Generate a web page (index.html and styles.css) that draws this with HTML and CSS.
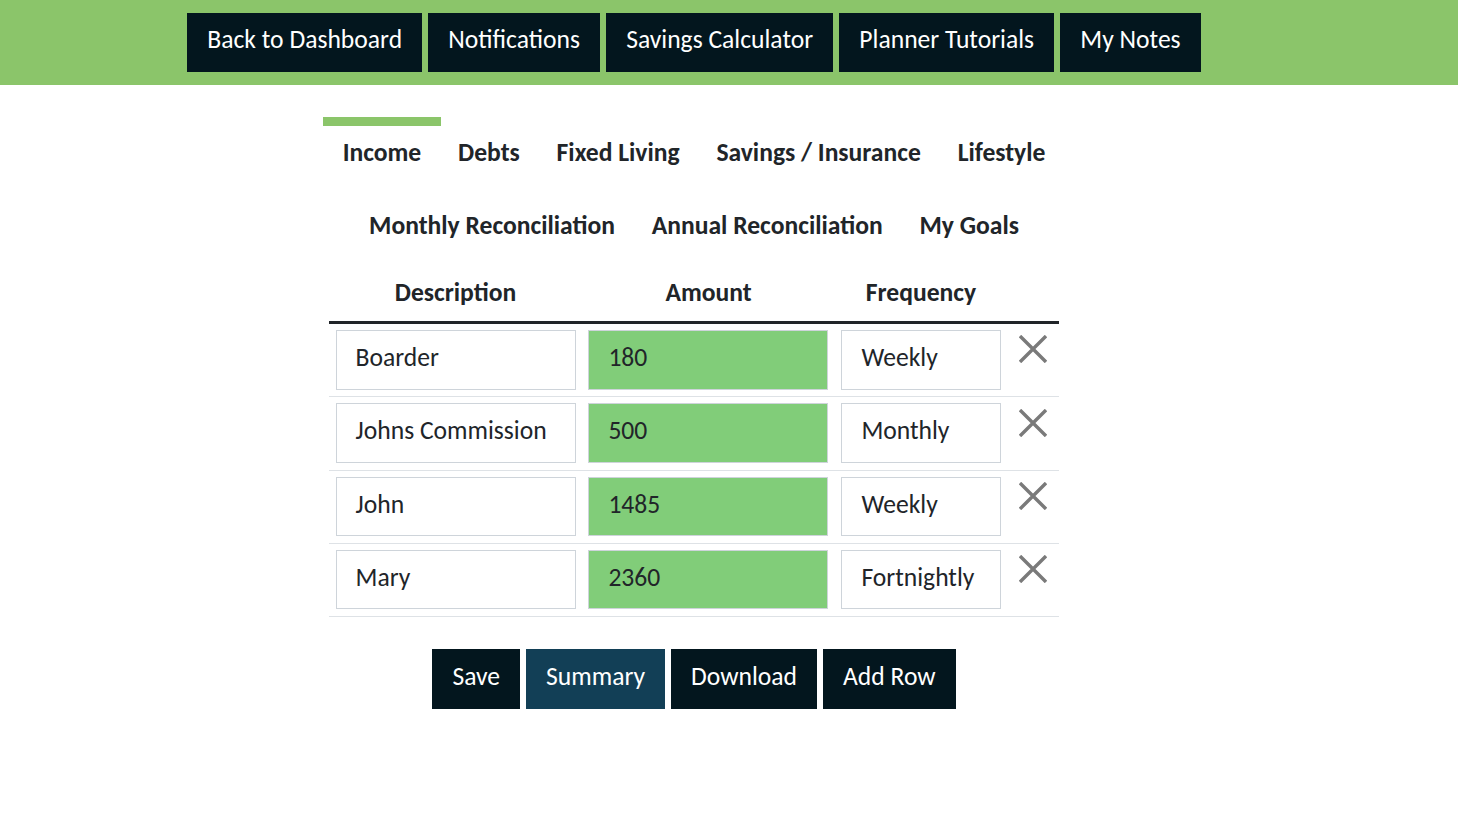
FILE: index.html
```html
<!DOCTYPE html>
<html lang="en">
<head>
<meta charset="utf-8">
<title>Planner</title>
<link rel="stylesheet" href="styles.css">
</head>
<body>
<header class="topbar">
  <nav class="topnav">
    <a class="btn">Back to Dashboard</a>
    <a class="btn">Notifications</a>
    <a class="btn">Savings Calculator</a>
    <a class="btn">Planner Tutorials</a>
    <a class="btn">My Notes</a>
  </nav>
</header>
<main class="page">
  <ul class="tabs">
    <li class="tab active">Income</li>
    <li class="tab">Debts</li>
    <li class="tab">Fixed Living</li>
    <li class="tab">Savings / Insurance</li>
    <li class="tab">Lifestyle</li>
    <li class="tab">Monthly Reconciliation</li>
    <li class="tab">Annual Reconciliation</li>
    <li class="tab">My Goals</li>
  </ul>
  <div class="table">
    <div class="row head">
      <div class="th">Description</div>
      <div class="th">Amount</div>
      <div class="th">Frequency</div>
      <div></div>
    </div>
    <div class="row">
      <div class="field">Boarder</div>
      <div class="field amount">180</div>
      <div class="field freq">Weekly</div>
      <button class="remove" aria-label="Remove"><svg viewBox="0 0 28 28" class="x"><path d="M1 1 27 27M27 1 1 27"/></svg></button>
    </div>
    <div class="row">
      <div class="field">Johns Commission</div>
      <div class="field amount">500</div>
      <div class="field freq">Monthly</div>
      <button class="remove" aria-label="Remove"><svg viewBox="0 0 28 28" class="x"><path d="M1 1 27 27M27 1 1 27"/></svg></button>
    </div>
    <div class="row">
      <div class="field">John</div>
      <div class="field amount">1485</div>
      <div class="field freq">Weekly</div>
      <button class="remove" aria-label="Remove"><svg viewBox="0 0 28 28" class="x"><path d="M1 1 27 27M27 1 1 27"/></svg></button>
    </div>
    <div class="row">
      <div class="field">Mary</div>
      <div class="field amount">2360</div>
      <div class="field freq">Fortnightly</div>
      <button class="remove" aria-label="Remove"><svg viewBox="0 0 28 28" class="x"><path d="M1 1 27 27M27 1 1 27"/></svg></button>
    </div>
  </div>
  <div class="actions">
    <a class="btn tall">Save</a>
    <a class="btn tall alt">Summary</a>
    <a class="btn tall">Download</a>
    <a class="btn tall">Add Row</a>
  </div>
</main>
</body>
</html>
```
FILE: styles.css
```css
* { box-sizing: border-box; }
html, body { margin: 0; padding: 0; }
body {
  background: #fff;
  color: #212529;
  font-family: Carlito, Lato, "Liberation Sans", sans-serif;
  font-size: 25.6px;
  height: 835px;
  overflow: hidden;
}
.topbar {
  background: #8bc56a;
  height: 85px;
  padding: 13px 70px 0 0;
}
.topnav {
  display: flex;
  justify-content: center;
  gap: 6px;
}
.btn {
  display: block;
  background: #03161e;
  color: #fff;
  height: 59px;
  line-height: 54px;
  padding: 0 20px;
  white-space: nowrap;
}
.topnav .btn { padding: 0 20.1px; }
.btn.tall { height: 60px; line-height: 56px; }
.btn.alt { background: #123f56; }
.page {
  width: 1388px;
  display: flex;
  flex-direction: column;
  align-items: center;
  padding-top: 32px;
}
.tabs {
  list-style: none;
  margin: 0;
  padding: 0;
  width: 760px;
  display: flex;
  flex-wrap: wrap;
  justify-content: center;
}
.tab {
  height: 73px;
  margin: 0 -1.1px;
  padding: 9px 19.5px 0;
  border-top: 9px solid transparent;
  font-weight: 700;
  line-height: 35px;
  white-space: nowrap;
}
.tab.active { border-top-color: #8bc56a; }
.table { width: 730px; }
.row {
  display: grid;
  grid-template-columns: 252px 253px 178px 47px;
  height: 73.3px;
  padding: 6px 0 0 7px;
  border-bottom: 1px solid #dee2e6;
}
.row.head {
  height: 61px;
  border-bottom: 3px solid #212529;
  padding: 0;
  grid-template-columns: 253px 253px 172px 52px;
}
.th {
  font-weight: 700;
  text-align: center;
  line-height: 60px;
}
.field {
  width: 240px;
  height: 59.6px;
  border: 1px solid #ced4da;
  padding: 0 18.6px;
  line-height: 53.6px;
  white-space: nowrap;
}
.field.freq { width: 160px; padding: 0 19.4px; }
.field.amount { background: #81cd79; padding: 0 19.4px; }
.remove {
  background: none;
  border: 0;
  padding: 0;
  width: 28px;
  height: 28px;
  margin: 5.3px 0 0 0;
}
.x { display: block; width: 28px; height: 28px; }
.x path { stroke: #7a7a7a; stroke-width: 3.4; fill: none; }
.actions {
  display: flex;
  justify-content: center;
  gap: 6px;
  margin-top: 32px;
}
```
